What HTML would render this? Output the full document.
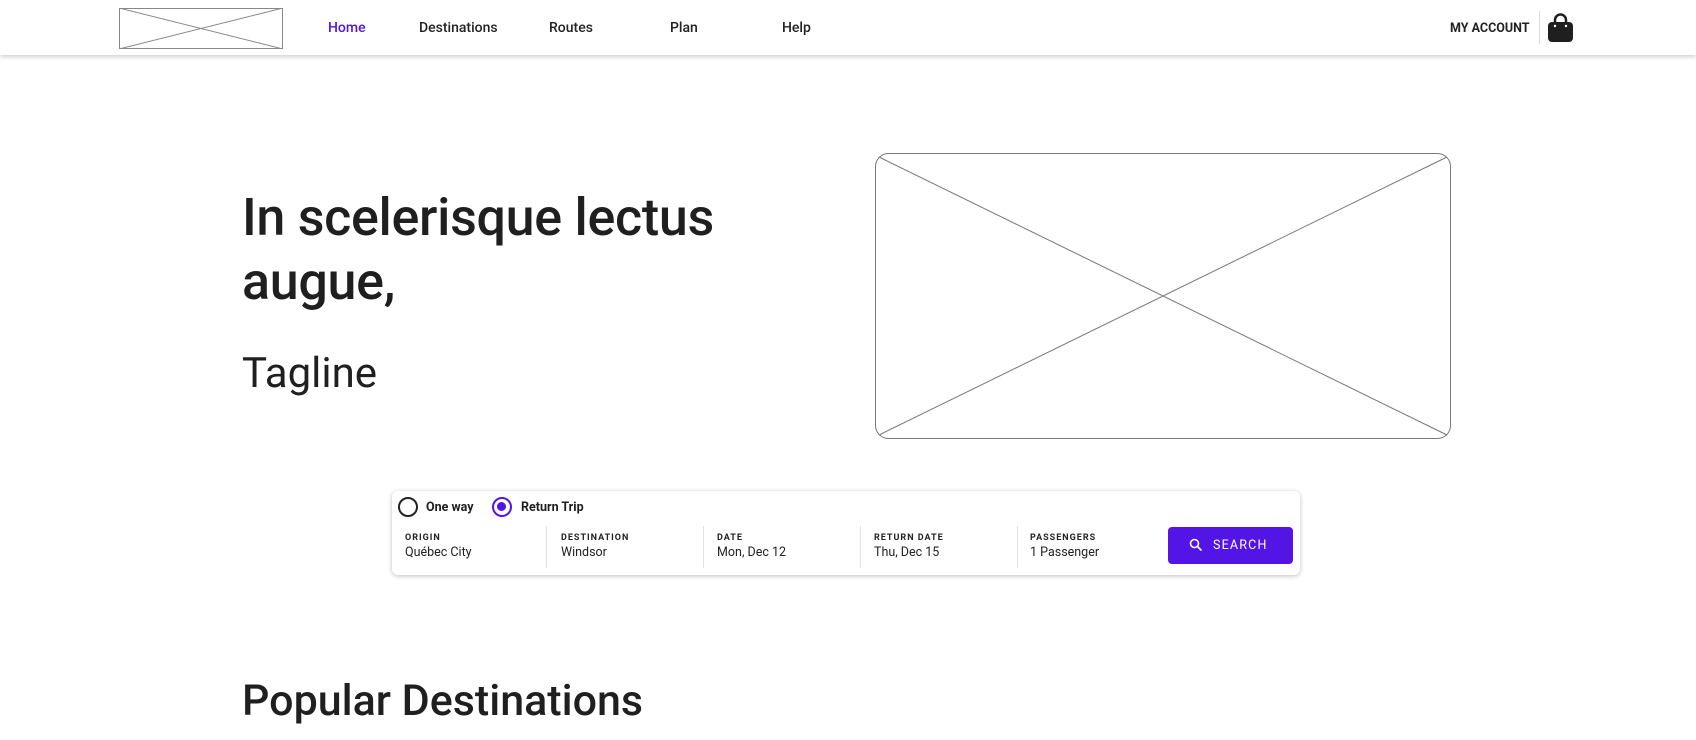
<!DOCTYPE html>
<html><head><meta charset="utf-8"><style>
*{margin:0;padding:0;box-sizing:border-box}
body{width:1696px;height:740px;overflow:hidden;background:#fff;font-family:Roboto,"Liberation Sans",sans-serif;color:#1f1f1f;position:relative}
.nav{position:absolute;left:0;top:0;width:1696px;height:55px;background:#fff;box-shadow:0 2px 4px rgba(0,0,0,.18)}
.abs{position:absolute}
.nav a{position:absolute;top:20px;font-size:14px;color:#222;text-decoration:none;font-weight:500}
.ph{position:absolute}
.lbl{position:absolute;font-size:9px;font-weight:bold;letter-spacing:1px;color:#222}
.val{position:absolute;font-size:12.5px;color:#222}
.div{position:absolute;top:526px;width:1px;height:42px;background:#e3e3e3}
</style></head><body>
<div class="nav">
<svg class="ph" style="left:119px;top:8px" width="164" height="41"><rect x=".5" y=".5" width="163" height="40" fill="none" stroke="#888"/><line x1="0" y1="0" x2="164" y2="41" stroke="#888"/><line x1="0" y1="41" x2="164" y2="0" stroke="#888"/></svg>
<a style="left:328px;color:#5314e6">Home</a>
<a style="left:419px">Destinations</a>
<a style="left:549px">Routes</a>
<a style="left:670px">Plan</a>
<a style="left:782px">Help</a>
<div class="abs" style="left:1450px;top:21px;font-size:12.5px;font-weight:bold;color:#222">MY ACCOUNT</div>
<div class="abs" style="left:1539px;top:11px;width:1px;height:33px;background:#ddd"></div>
<svg class="ph" style="left:1547px;top:13px" width="27" height="30" viewBox="0 0 27 30"><path d="M8 11V7a5.5 5.5 0 0 1 11 0v4" fill="none" stroke="#1f1f1f" stroke-width="2.5"/><rect x="1" y="9" width="25" height="20" rx="4" fill="#1f1f1f"/><circle cx="8" cy="13" r="1.2" fill="#fff"/><circle cx="19" cy="13" r="1.2" fill="#fff"/></svg>
</div>
<div class="abs" style="left:242px;top:186px;font-size:52px;font-weight:500;line-height:64px;letter-spacing:-.3px;width:600px">In scelerisque lectus augue,</div>
<div class="abs" style="left:242px;top:349px;font-size:42px;line-height:50px">Tagline</div>
<svg class="ph" style="left:875px;top:153px" width="576" height="286"><rect x=".5" y=".5" width="575" height="285" rx="13" fill="none" stroke="#777"/><line x1="4" y1="4" x2="572" y2="282" stroke="#777"/><line x1="4" y1="282" x2="572" y2="4" stroke="#777"/></svg>
<div class="abs" style="left:392px;top:491px;width:908px;height:84px;background:#fff;border-radius:6px;box-shadow:0 1px 5px rgba(0,0,0,.25)"></div>
<div class="abs" style="left:398px;top:497px;width:20px;height:20px;border:2.5px solid #222;border-radius:50%"></div>
<div class="abs" style="left:426px;top:500px;font-size:12.5px;font-weight:bold">One way</div>
<div class="abs" style="left:492px;top:497px;width:20px;height:20px;border:2.5px solid #5314e6;border-radius:50%"><div style="margin:3px;width:9px;height:9px;border-radius:50%;background:#5314e6"></div></div>
<div class="abs" style="left:521px;top:500px;font-size:12.5px;font-weight:bold">Return Trip</div>
<div class="lbl" style="left:405px;top:533px">ORIGIN</div><div class="val" style="left:405px;top:545px">Québec City</div>
<div class="div" style="left:546px"></div>
<div class="lbl" style="left:561px;top:533px">DESTINATION</div><div class="val" style="left:561px;top:545px">Windsor</div>
<div class="div" style="left:703px"></div>
<div class="lbl" style="left:717px;top:533px">DATE</div><div class="val" style="left:717px;top:545px">Mon, Dec 12</div>
<div class="div" style="left:860px"></div>
<div class="lbl" style="left:874px;top:533px">RETURN DATE</div><div class="val" style="left:874px;top:545px">Thu, Dec 15</div>
<div class="div" style="left:1017px"></div>
<div class="lbl" style="left:1030px;top:533px">PASSENGERS</div><div class="val" style="left:1030px;top:545px">1 Passenger</div>
<div class="abs" style="left:1168px;top:527px;width:125px;height:37px;background:#5314e6;border-radius:4px;color:#fff;font-size:12.5px;letter-spacing:1.2px;line-height:38px;padding-left:45px">SEARCH</div>
<svg class="ph" style="left:1189px;top:538px" width="14" height="14"><circle cx="5.5" cy="5.5" r="4" fill="none" stroke="#fff" stroke-width="1.6"/><line x1="8.5" y1="8.5" x2="12.5" y2="12.5" stroke="#fff" stroke-width="1.6"/></svg>
<div class="abs" style="left:242px;top:676px;font-size:43px;font-weight:500;line-height:50px">Popular Destinations</div>
</body></html>
